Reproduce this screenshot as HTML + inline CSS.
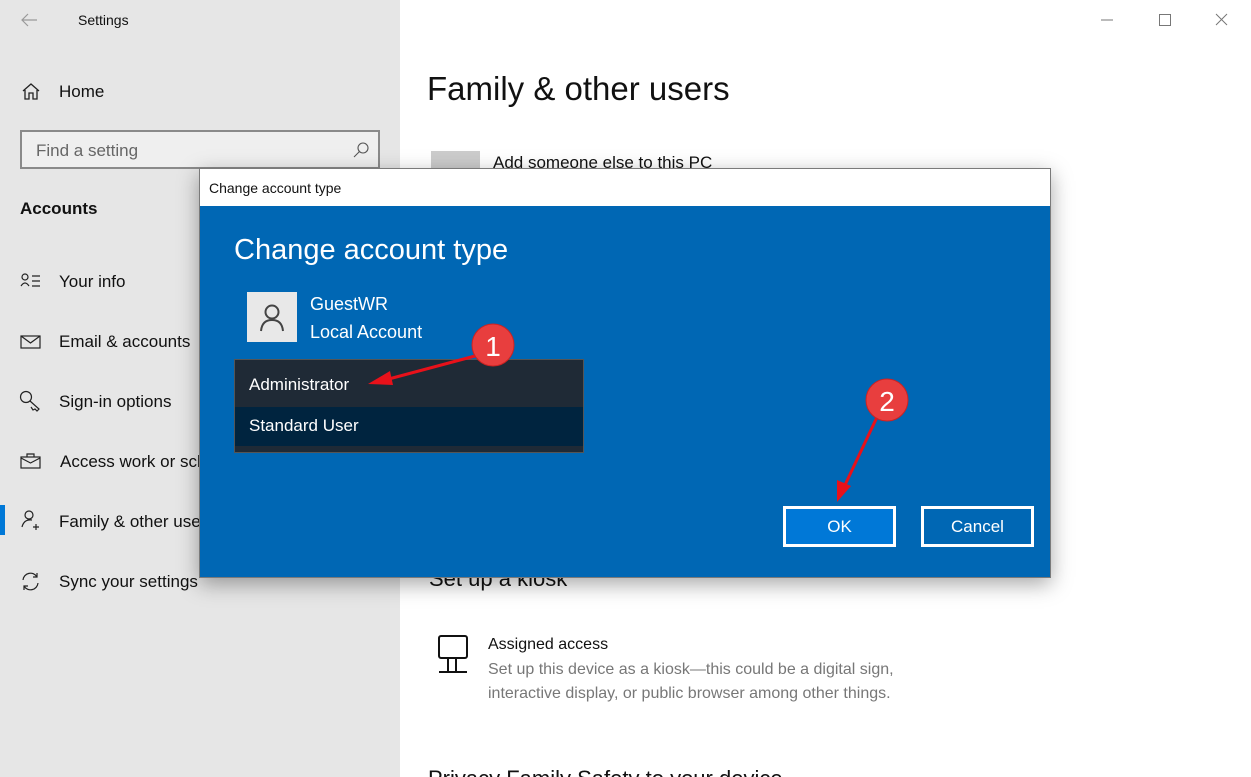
<!DOCTYPE html>
<html><head><meta charset="utf-8"><style>
*{margin:0;padding:0;box-sizing:border-box}
html,body{width:1251px;height:777px;overflow:hidden}
body{background:#fff;font-family:"Liberation Sans",sans-serif;position:relative;color:#000}
.abs{position:absolute;white-space:nowrap}
#left{position:absolute;left:0;top:0;width:400px;height:777px;background:#e6e6e6}
.nav{font-size:17px;color:#111}
svg{position:absolute}
</style></head><body>
<div id="left">
<svg style="left:20px;top:12px" width="18" height="16"><path d="M17 8H2M8 2L2 8l6 6" stroke="#999" fill="none" stroke-width="1.2"/></svg>
<div class="abs" style="left:78px;top:12px;font-size:14px;color:#111">Settings</div>
<svg style="left:21px;top:82px" width="20" height="18"><path d="M2 9L10 2l8 7M4 8v9h4v-6h4v6h4V8" stroke="#222" fill="none" stroke-width="1.3"/></svg>
<div class="abs nav" style="left:59px;top:82px">Home</div>
<div class="abs" style="left:20px;top:130px;width:360px;height:39px;border:2px solid #8a8a8a;background:#efefef"></div>
<div class="abs" style="left:36px;top:141px;font-size:17px;color:#666">Find a setting</div>
<svg style="left:352px;top:141px" width="18" height="18"><circle cx="11" cy="7" r="5" stroke="#555" fill="none" stroke-width="1.1"/><path d="M7.5 10.5L2 16" stroke="#555" stroke-width="1.1"/></svg>
<div class="abs" style="left:20px;top:199px;font-size:17px;font-weight:bold;color:#111">Accounts</div>
<svg style="left:20px;top:273px" width="22" height="16"><circle cx="5" cy="4" r="3" stroke="#222" fill="none" stroke-width="1.2"/><path d="M1 13q4-6 8 0M12 3h8M12 8h8M12 13h8" stroke="#222" fill="none" stroke-width="1.2"/></svg>
<div class="abs nav" style="left:59px;top:272px">Your info</div>
<svg style="left:20px;top:335px" width="21" height="14"><rect x="1" y="1" width="19" height="12" stroke="#222" fill="none" stroke-width="1.2"/><path d="M1 1l9.5 7L20 1" stroke="#222" fill="none" stroke-width="1.2"/></svg>
<div class="abs nav" style="left:59px;top:332px">Email &amp; accounts</div>
<svg style="left:19px;top:390px" width="22" height="22"><circle cx="7" cy="7" r="5.5" stroke="#222" fill="none" stroke-width="1.2"/><path d="M11 11l9 8-2 2-2-2-2 1-2-3" stroke="#222" fill="none" stroke-width="1.2"/></svg>
<div class="abs nav" style="left:59px;top:392px">Sign-in options</div>
<svg style="left:20px;top:453px" width="21" height="16"><rect x="1" y="4" width="19" height="11" stroke="#222" fill="none" stroke-width="1.2"/><path d="M7 4V1h7v3M1 5l9.5 5L20 5" stroke="#222" fill="none" stroke-width="1.2"/></svg>
<div class="abs nav" style="left:60px;top:452px">Access work or school</div>
<div class="abs" style="left:0;top:505px;width:5px;height:30px;background:#0078d7"></div>
<svg style="left:20px;top:510px" width="22" height="20"><circle cx="9" cy="5" r="4" stroke="#222" fill="none" stroke-width="1.2"/><path d="M2 17q2-8 10-7M16 14v6M13 17h6" stroke="#222" fill="none" stroke-width="1.2"/></svg>
<div class="abs nav" style="left:59px;top:512px">Family &amp; other users</div>
<svg style="left:20px;top:571px" width="21" height="21"><path d="M3 9a7.5 7.5 0 0 1 14-3M18 12a7.5 7.5 0 0 1-14 3M17 2v4h-4M4 19v-4h4" stroke="#222" fill="none" stroke-width="1.2"/></svg>
<div class="abs nav" style="left:59px;top:572px">Sync your settings</div>
</div>
<svg style="left:1100px;top:12px" width="130" height="16"><path d="M1 8h12" stroke="#777"/><rect x="59.5" y="2.5" width="11" height="11" stroke="#777" fill="none"/><path d="M116 2l11 11M127 2l-11 11" stroke="#777"/></svg>
<div class="abs" style="left:427px;top:70px;font-size:33px;font-weight:300;color:#111">Family &amp; other users</div>
<div class="abs" style="left:431px;top:151px;width:49px;height:20px;background:#ccc"></div>
<div class="abs" style="left:493px;top:153px;font-size:17px;color:#111">Add someone else to this PC</div>
<div class="abs" style="left:429px;top:566px;font-size:22px;color:#111">Set up a kiosk</div>
<svg style="left:437px;top:634px" width="34" height="42"><rect x="2" y="2" width="28" height="22" rx="2" stroke="#111" fill="none" stroke-width="2"/><path d="M11 24v14M19 24v14M2 38h28" stroke="#111" stroke-width="2"/></svg>
<div class="abs" style="left:488px;top:636px;font-size:16px;color:#111">Assigned access</div>
<div class="abs" style="left:488px;top:658px;font-size:16px;color:#777;line-height:24px">Set up this device as a kiosk—this could be a digital sign,<br>interactive display, or public browser among other things.</div>
<div class="abs" style="left:428px;top:766px;font-size:22px;color:#111">Privacy Family Safety to your device</div>
<!-- dialog -->
<div class="abs" style="left:199px;top:168px;width:852px;height:410px;background:#0067b4;border:1px solid #7a7a7a;box-shadow:0 6px 20px rgba(0,0,0,.35)"></div>
<div class="abs" style="left:200px;top:169px;width:850px;height:37px;background:#fff"></div>
<div class="abs" style="left:209px;top:180px;font-size:14px;color:#111">Change account type</div>
<div class="abs" style="left:234px;top:234px;font-size:29px;color:#fff;font-weight:300">Change account type</div>
<div class="abs" style="left:247px;top:292px;width:50px;height:50px;background:#e8e8e8"></div>
<svg style="left:258px;top:302px" width="28" height="30"><circle cx="14" cy="10" r="6.5" stroke="#444" fill="none" stroke-width="2"/><path d="M3 29q1-11 11-11t11 11" stroke="#444" fill="none" stroke-width="2"/></svg>
<div class="abs" style="left:310px;top:294px;font-size:18px;color:#fff">GuestWR</div>
<div class="abs" style="left:310px;top:322px;font-size:18px;color:#fff">Local Account</div>
<div class="abs" style="left:234px;top:359px;width:350px;height:94px;background:#1f2a36;border:1px solid #555"></div>
<div class="abs" style="left:235px;top:407px;width:348px;height:39px;background:#00243f"></div>
<div class="abs" style="left:249px;top:375px;font-size:17px;color:#fff">Administrator</div>
<div class="abs" style="left:249px;top:416px;font-size:17px;color:#fff">Standard User</div>
<div class="abs" style="left:783px;top:506px;width:113px;height:41px;background:#0078d7;border:3px solid #fff;color:#fff;font-size:17px;text-align:center;line-height:35px">OK</div>
<div class="abs" style="left:921px;top:506px;width:113px;height:41px;border:3px solid #fff;color:#fff;font-size:17px;text-align:center;line-height:35px">Cancel</div>
<svg style="left:0;top:0" width="1251" height="777">
<path d="M475 356L385 380" stroke="#e8111a" stroke-width="3"/><path d="M368 384l22-13 3 14z" fill="#e8111a"/>
<path d="M878 415L845 485" stroke="#e8111a" stroke-width="3"/><path d="M837 502l0-22 14 6z" fill="#e8111a"/>
<circle cx="493" cy="345" r="21" fill="#e83e3e" stroke="#c22" stroke-width="1"/>
<text x="493" y="356" font-family="Liberation Sans" font-size="28" fill="#fff" text-anchor="middle">1</text>
<circle cx="887" cy="400" r="21" fill="#e83e3e" stroke="#c22" stroke-width="1"/>
<text x="887" y="411" font-family="Liberation Sans" font-size="28" fill="#fff" text-anchor="middle">2</text>
</svg>
</body></html>
